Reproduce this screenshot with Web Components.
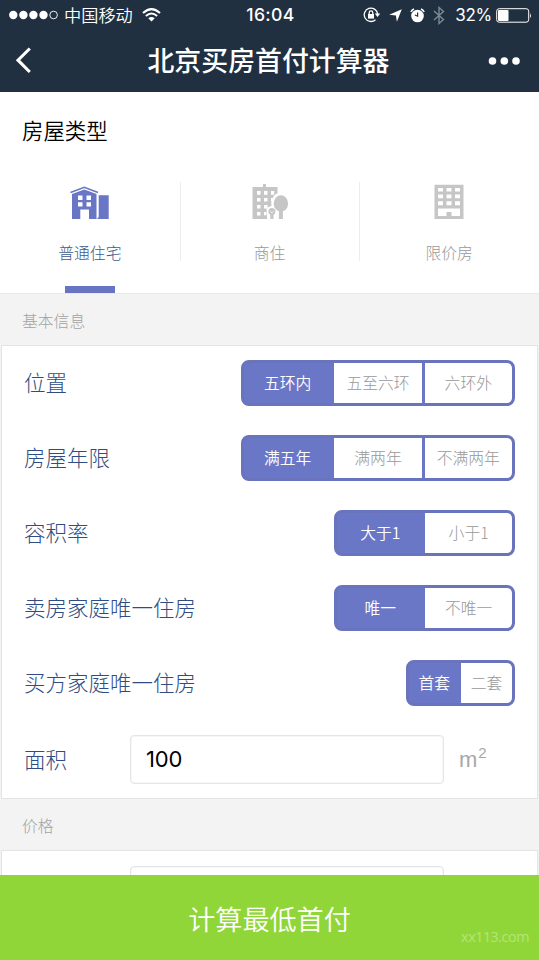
<!DOCTYPE html>
<html lang="zh-CN">
<head>
<meta charset="utf-8">
<title>北京买房首付计算器</title>
<style>
html,body{margin:0;height:100%;overflow:hidden}
body{font-family:"Inter","Noto Sans CJK SC",sans-serif;background:#f3f3f3}
</style>
</head>
<body>
<calc-app></calc-app>
<script>
function define(name, html, setup) {
  const tpl = document.createElement('template');
  tpl.innerHTML = html;
  customElements.define(name, class extends HTMLElement {
    connectedCallback() {
      if (this.shadowRoot) return;
      const root = this.attachShadow({ mode: 'open' });
      root.append(tpl.content.cloneNode(true));
      if (setup) setup(this, root);
    }
  });
}

define('status-bar', `
<style>
:host{display:grid;grid-template-columns:1fr auto 1fr;align-items:center;height:30px;padding:0 7px 0 9px;color:#fff;font-size:17.2px;line-height:30px;white-space:nowrap}
.l,.r{display:flex;align-items:center}
.r{justify-content:flex-end}
svg{display:block;flex:none}
.carrier{margin:0 9px 0 6px;font-family:"Noto Sans CJK SC",sans-serif;font-weight:350;line-height:28px;padding-bottom:1px}
.time{font-weight:500;font-size:17.6px;letter-spacing:.4px}
.pct{font-size:17px;margin:0 4px 0 10px;letter-spacing:-.3px}
</style>
<div class="l">
<svg width="49" height="10" viewBox="0 0 49 10" fill="#fff"><circle cx="4.3" cy="5" r="4.2"/><circle cx="14.4" cy="5" r="4.2"/><circle cx="24.4" cy="5" r="4.2"/><circle cx="34.5" cy="5" r="4.2"/><circle cx="44.6" cy="5" r="3.8" fill="none" stroke="#fff" stroke-width=".9"/></svg>
<span class="carrier">中国移动</span>
<svg width="19" height="14" viewBox="0 0 19 14" fill="none" stroke="#fff" stroke-width="2.1"><path d="M1 5Q9.500-2.800 18 5M3.900 8Q9.500 3 15.100 8"/><path d="M6.300 10.300Q9.500 7.500 12.700 10.300L9.500 13.500Z" fill="#fff" stroke="none"/></svg>
</div>
<span class="time">16:04</span>
<div class="r">
<svg width="18" height="16" viewBox="0 0 18 16" fill="none" stroke="#fff" stroke-width="1.3"><path d="M12.500 12.700A6.700 6.700 0 1 1 14.600 7"/><path d="M11.800 6.600H17.200L14.500 10Z" fill="#fff" stroke="none"/><rect x="5" y="7" width="6" height="4.600" fill="#fff" stroke="none"/><path d="M6.200 7V5.700a1.800 1.800 0 0 1 3.600 0V7"/></svg>
<svg style="margin-left:8px" width="13" height="13" viewBox="0 0 13 13" fill="#fff"><path d="M12.800.2 7.900 12.800 6.900 6.400.2 5.800Z"/></svg>
<svg style="margin-left:8px" width="15" height="15" viewBox="0 0 15 15"><circle cx="7.500" cy="8" r="6.300" fill="#fff"/><path d="M.8 4A7 7 0 0 1 4 1M11 1a7 7 0 0 1 3.200 3" stroke="#fff" stroke-width="1.500" fill="none"/><path d="M7.600 4.500V8.200L4.900 7" stroke="#203041" stroke-width="1.200" fill="none"/></svg>
<svg style="margin-left:8px" width="12" height="19" viewBox="0 0 12 19" fill="none" stroke="#7e8995" stroke-width="1.400"><path d="M1 5 10.500 13.500 6 17.500V1.500L10.500 5.500 1 14"/></svg>
<span class="pct">32%</span>
<svg width="36" height="15" viewBox="0 0 36 15"><rect x=".7" y=".7" width="32" height="13.500" rx="2.500" fill="none" stroke="#fff" stroke-width="1"/><rect x="2" y="2" width="10.500" height="11" rx="1" fill="#fff"/><path d="M34 5q1.800 2.500 0 5Z" fill="#fff"/></svg>
</div>`);

define('nav-bar', `
<style>
:host{display:grid;grid-template-columns:1fr auto 1fr;align-items:center;height:62px;padding:0 19px 0 15px;color:#fff}
.t{font:500 26.9px/60px "Noto Sans CJK SC",sans-serif;margin-bottom:2px;margin-right:-2px}
.more{justify-self:end}
svg{display:block}
.back{margin-top:-3px}
.more{margin-top:-1px}
</style>
<svg class="back" width="18" height="28" viewBox="0 0 18 28" fill="none" stroke="#fff" stroke-width="3.100"><path d="M14.800 2.500 3 14.200 14.800 26"/></svg>
<span class="t"><slot></slot></span>
<svg class="more" width="32" height="10" viewBox="0 0 32 10" fill="#fff"><circle cx="4.500" cy="5" r="3.800"/><circle cx="16.300" cy="5" r="3.800"/><circle cx="28" cy="5" r="3.800"/></svg>`);

const icons = {
home: `<svg width="42" height="40" viewBox="0 0 42 40" fill="currentColor"><path d="M1.500 9.500 15.300 4.300 29 9.500" fill="none" stroke="currentColor" stroke-width="1.700"/><path fill-rule="evenodd" d="M3 11 15.300 6.500 27.500 11V36H20V26.500H11.300V36H3ZM9 12.500V17H13.500V12.500ZM17.500 12.500V17H22V12.500ZM9 19.300V23.600H13.500V19.300ZM17.500 19.300V23.600H22V19.300Z"/><path d="M29.700 12.300H39.700V36H28.500V34.500H29.700Z"/></svg>`,
mixed: `<svg width="42" height="40" viewBox="0 0 42 40" fill="currentColor"><path d="M14 1h3v3h11.500v32H3.500V4H14z"/><path fill="#fff" d="M8 8h3.500v3.800H8zM15 8h3.500v3.800H15zM22 8h3.200v3.800H22zM8 15h3.500v3.600H8zM15 15h3.500v3.600H15zM22 15h3.200v3.600H22zM8 22h3.500v3.600H8zM15 22h3.500v3.600H15zM8 29h3.500v3.500H8zM15 29h2.500v3.500H15z"/><path fill="#fff" d="M17.500 25 23 22.500 31 22V37H18V33Z"/><ellipse cx="31.700" cy="20.500" rx="9.500" ry="10.800" fill="#fff"/><path d="M15 32.500h3V36h-3z"/><ellipse cx="31.900" cy="20.500" rx="7.200" ry="8.300"/><path d="M29.900 26h4v10h-4z"/><circle cx="22.900" cy="28.500" r="3.500"/><path d="M21.300 30h3.200v6h-3.200z"/><path stroke="#fff" stroke-width=".8" fill="none" d="m21.400 28.300 1.500 1.600 1.500-1.600"/></svg>`,
block: `<svg width="42" height="40" viewBox="0 0 42 40" fill="currentColor"><path fill-rule="evenodd" d="M6.500 1.700H35.500V36H6.500ZM10 5V8.500H15V5ZM18.500 5V8.500H23.500V5ZM27 5V8.500H32V5ZM10 11.500V15.300H15V11.500ZM18.500 11.500V15.300H23.500V11.500ZM27 11.500V15.300H32V11.500ZM10 18.300V22.300H15V18.300ZM18.500 18.300V22.300H23.500V18.300ZM27 18.300V22.300H32V18.300ZM10 25.500V33H18.500V29H23.500V33H32V25.500Z"/></svg>`
};

define('type-tab', `
<style>
:host{display:flex;flex-direction:column;align-items:center;position:relative;flex:1;height:111px;color:#c6c6c6}
.label{font:300 15.8px/24px "Noto Sans CJK SC",sans-serif;color:#989898;margin-top:18px}
.icon{height:40px;padding-top:1px}
.icon svg{display:block}
:host([active]){color:#6976c6}
:host([active]) .label{color:#3f5a8c}
:host([active])::after{content:"";width:50px;height:7px;background:#6874c3;margin-top:auto}
:host(:not(:last-of-type))::before{content:"";position:absolute;right:-1px;top:0;width:1px;height:79px;background:#ededed}
</style>
<div class="icon"></div><span class="label"><slot></slot></span>`,
(el, root) => { root.querySelector('.icon').innerHTML = icons[el.getAttribute('icon')]; });

define('type-picker', `
<style>
:host{display:flex;flex-direction:column;height:201px;background:#fff;border-bottom:1px solid #e8e8e8}
h2{margin:0;padding:22px 22px 0;font:350 21.4px/32px "Noto Sans CJK SC",sans-serif;color:#000}
.tabs{display:flex;margin-top:auto}
</style>
<h2>房屋类型</h2>
<div class="tabs"><slot></slot></div>`);

define('section-title', `
<style>:host{display:block;box-sizing:border-box;height:51px;padding:0 22px;background:#f3f3f3;color:#a2a2a2;font:300 15.8px/54px "Noto Sans CJK SC",sans-serif}</style><slot></slot>`);

define('form-panel', `
<style>:host{display:block;background:#fff;border:1px solid #e4e4e4;margin:0 1px}</style><slot></slot>`);

define('form-row', `
<style>
:host{display:flex;align-items:center;justify-content:space-between;box-sizing:border-box;height:75px;padding:0 22px 2px}
.k{font:300 21.5px/32px "Noto Sans CJK SC",sans-serif;color:#2f4d82;margin-top:-2px}
</style>
<span class="k"></span><slot></slot>`,
(el, root) => { root.querySelector('.k').textContent = el.getAttribute('label') || ''; });

define('seg-control', `
<style>
:host{display:flex;box-sizing:border-box;height:46px;border:3px solid #6a74bd;border-radius:8px;background:#6a76c6;gap:3px;overflow:hidden;width:var(--w,274px)}
span{flex:1;display:flex;align-items:center;justify-content:center;background:#fff;color:#989898;font:300 15.8px/24px "Noto Sans CJK SC",sans-serif;white-space:nowrap}
span:last-child{border-radius:0 4px 4px 0}
.on{background:#6a76c6;color:#fff;font-weight:350}
:host([pair]) span:last-child{margin-left:-1.500px}
</style>`,
(el, root) => {
  el.getAttribute('options').split(',').forEach((text, i) => {
    const s = document.createElement('span');
    s.textContent = text;
    if (i === 0) s.className = 'on';
    root.append(s);
  });
});

define('area-field', `
<style>
:host{display:flex;align-items:center;width:385px}
.box{box-sizing:border-box;width:314px;height:49px;border:1.500px solid #e6e6e6;box-shadow:inset 0 0 0 1px #f6f6f6;border-radius:4px;padding-left:15px;font:400 22px/46px "Inter",sans-serif;letter-spacing:-.2px;color:#000}
.unit{margin-left:15px;font:300 22px/30px "Liberation Sans",sans-serif;color:#a8a8a8;display:flex}
sup{font-size:15px;line-height:16px;margin:0 0 0 1px}
</style>
<div class="box"><slot></slot></div><span class="unit"></span>`,
(el, root) => {
  if (el.hasAttribute('unit')) root.querySelector('.unit').innerHTML = el.getAttribute('unit') + '<sup>2</sup>';
});

define('submit-bar', `
<style>
:host{display:block;position:fixed;inset:auto 0 0 0;height:85px;background:#90d639;color:#fff;text-align:center;font:350 27.100px/88px "Noto Sans CJK SC",sans-serif}
i{position:absolute;right:10px;bottom:13px;font:400 14.400px/20px "Open Sans",sans-serif;letter-spacing:-.5px;color:#b6e47b}
</style><slot></slot><i>xx113.com</i>`);

define('calc-app', `
<style>
:host{display:block;height:960px;overflow:hidden;background:#f3f3f3}
header{background:#203041;height:92px}
.size{height:77px;padding-bottom:0}
.price{height:80px;align-items:flex-start;padding-top:15px}
</style>
<header><status-bar></status-bar><nav-bar>北京买房首付计算器</nav-bar></header>
<type-picker>
<type-tab icon="home" active>普通住宅</type-tab><type-tab icon="mixed">商住</type-tab><type-tab icon="block">限价房</type-tab>
</type-picker>
<section-title>基本信息</section-title>
<form-panel>
<form-row label="位置"><seg-control options="五环内,五至六环,六环外"></seg-control></form-row>
<form-row label="房屋年限"><seg-control options="满五年,满两年,不满两年"></seg-control></form-row>
<form-row label="容积率"><seg-control pair style="--w:181px" options="大于1,小于1"></seg-control></form-row>
<form-row label="卖房家庭唯一住房"><seg-control pair style="--w:181px" options="唯一,不唯一"></seg-control></form-row>
<form-row label="买方家庭唯一住房"><seg-control pair style="--w:109px" options="首套,二套"></seg-control></form-row>
<form-row class="size" label="面积"><area-field unit="m">100</area-field></form-row>
</form-panel>
<section-title>价格</section-title>
<form-panel><form-row class="price"><area-field></area-field></form-row></form-panel>
<submit-bar>计算最低首付</submit-bar>`);
</script>
</body>
</html>
